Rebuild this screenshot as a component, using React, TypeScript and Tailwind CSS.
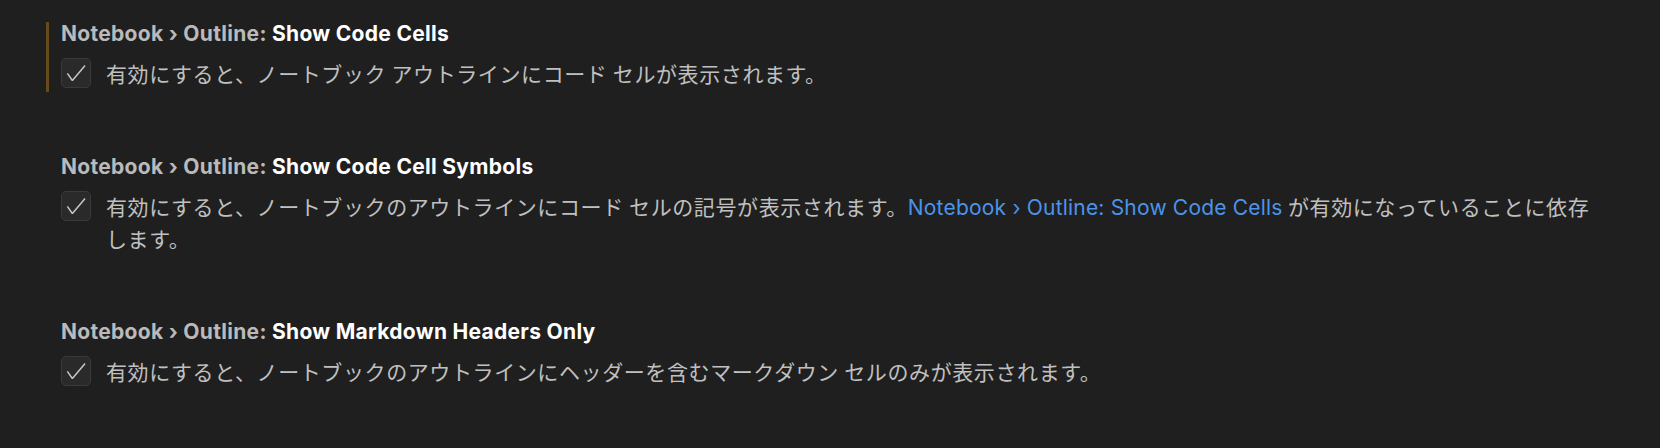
import React from "react";

const latin = "font-['Inter','Noto_Sans_CJK_JP',sans-serif]";

function Check() {
  return (
    <div className="w-[30px] h-[30px] shrink-0 rounded-[5px] bg-[#2a2a2a] border border-[#3a3a3a] flex items-center justify-center">
      <svg width="24" height="24" viewBox="0 0 16 16" fill="#c6c6c6">
        <path d="M14.431 3.323l-8.47 10-.79-.036-3.35-4.77.818-.574 2.978 4.24 8.051-9.506.764.646z" />
      </svg>
    </div>
  );
}

function Setting({
  keyName,
  modified,
  children,
}: {
  keyName: string;
  modified?: boolean;
  children: React.ReactNode;
}) {
  return (
    <div
      className={`border-l-[3px] pl-[12px] pb-[4px] ${
        modified ? "border-[#654b1c]" : "border-transparent"
      }`}
    >
      <div className={`${latin} text-[21px] leading-[24px] font-bold tracking-[0.3px]`}>
        <span className="text-[#bababa]">Notebook › Outline: </span>
        <span className="text-white">{keyName}</span>
      </div>
      <div className="mt-[12px] flex gap-[15px] items-start">
        <Check />
        <div className="font-['Noto_Sans_CJK_JP','Inter',sans-serif] text-[21px] leading-[30px] tracking-[0.6px] text-[#c0c0c0] pr-[40px]">
          {children}
        </div>
      </div>
    </div>
  );
}

export default function App() {
  return (
    <div className="w-[1660px] h-[448px] bg-[#1f1f1f] pt-[22px] pl-[46px] flex flex-col gap-[63px] overflow-hidden">
      <Setting keyName="Show Code Cells" modified>
        有効にすると、ノートブック アウトラインにコード セルが表示されます。
      </Setting>
      <Setting keyName="Show Code Cell Symbols">
        有効にすると、ノートブックのアウトラインにコード セルの記号が表示されます。
        <span className={`${latin} tracking-[0.2px] text-[#4b94ea]`}>Notebook › Outline: Show Code Cells</span>{" "}
        が有効になっていることに依存
        <br />
        します。
      </Setting>
      <Setting keyName="Show Markdown Headers Only">
        有効にすると、ノートブックのアウトラインにヘッダーを含むマークダウン セルのみが表示されます。
      </Setting>
    </div>
  );
}
